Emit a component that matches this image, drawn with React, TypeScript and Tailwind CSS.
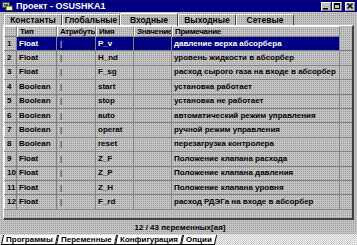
const rows = [
  ["1", "Float", "I", "P_v", "", "давление верха абсорбера"],
  ["2", "Float", "I", "H_nd", "", "уровень жидкости в абсорбер"],
  ["3", "Float", "I", "F_sg", "", "расход сырого газа на входе в абсорбер"],
  ["4", "Boolean", "I", "start", "", "установка работает"],
  ["5", "Boolean", "I", "stop", "", "установка  не работает"],
  ["6", "Boolean", "I", "auto", "", "автоматический режим управления"],
  ["7", "Boolean", "I", "operat", "", "ручной режим управления"],
  ["8", "Boolean", "I", "reset", "", "перезагрузка контролера"],
  ["9", "Float", "I", "Z_F", "", "Положение клапана расхода"],
  ["10", "Float", "I", "Z_P", "", "Положение клапана давления"],
  ["11", "Float", "I", "Z_H", "", "Положение клапана уровня"],
  ["12", "Float", "I", "F_rd", "", "расход РДЭГа на входе в абсорбер"],
];

const topTabs = ["Константы", "Глобальные", "Входные", "Выходные", "Сетевые"];
const bottomTabs = ["Программы", "Переменные", "Конфигурация", "Опции"];

const dither = "[background:conic-gradient(#c4c4c4_0_25%,#9a9a9a_0_50%,#c4c4c4_0_75%,#c4c4c4_0)_0_0/2px_2px]";
const lightDither = "[background:conic-gradient(#f4f4f4_0_25%,#c8c8c8_0_50%,#f4f4f4_0_75%,#c8c8c8_0)_0_0/2px_2px]";
const raised = "border-t border-l border-t-white border-l-white border-r border-b border-r-[#808080] border-b-[#808080]";

function TitleIcon() {
  return (
    <svg width="11" height="10" viewBox="0 0 11 10">
      <rect x="0.5" y="1.5" width="7" height="5" fill="#c0c0c0" stroke="#404040" />
      <rect x="2" y="3" width="4" height="2" fill="#008080" />
      <rect x="4" y="5" width="6.5" height="4.5" fill="#ffff80" stroke="#404040" />
    </svg>
  );
}

function WinButton({ kind }: { kind: "min" | "max" | "close" }) {
  return (
    <div className={`flex h-[9px] w-[10px] items-center justify-center bg-[#c0c0c0] ${raised}`}>
      <svg width="8" height="7" viewBox="0 0 8 7">
        {kind === "min" && <rect x="1" y="5" width="5" height="1.5" fill="#000" />}
        {kind === "max" && <rect x="1.5" y="0.5" width="5" height="5" fill="none" stroke="#000" strokeWidth="1" />}
        {kind === "max" && <rect x="1.5" y="0.5" width="5" height="1.5" fill="#000" />}
        {kind === "close" && <path d="M1.5 0.5 L6.5 5.5 M6.5 0.5 L1.5 5.5" stroke="#000" strokeWidth="1.5" />}
      </svg>
    </div>
  );
}

export default function App() {
  const cols = ["w-[13px]", "w-[40px]", "w-[39px]", "w-[38px]", "w-[38px]", "w-[168px]"];
  return (
    <div
      className={`flex h-[245px] w-[357px] flex-col overflow-hidden ${dither} text-[8px] font-bold text-black`}
      style={{ fontFamily: '"Liberation Sans", Arial, sans-serif' }}
    >
      <div className="flex h-[12px] shrink-0 items-center bg-[#000080] pl-[2px] pr-[2px] text-white">
        <TitleIcon />
        <span className="ml-[3px] text-[9px] leading-none">Проект - OSUSHKA1</span>
        <div className="ml-auto flex gap-[1px]">
          <WinButton kind="min" />
          <WinButton kind="max" />
          <div className="w-[1px]" />
          <WinButton kind="close" />
        </div>
      </div>

      <div className="mt-[1px] flex h-[12px] shrink-0 items-end pl-[4px] text-[8.5px]">
        {topTabs.map((t) => {
          const active = t === "Входные";
          return (
            <div
              key={t}
              className={`flex w-[58px] shrink-0 items-center justify-center rounded-t-[2px] border-t border-l border-r border-t-white border-l-white border-r-[#404040] ${
                active ? "relative z-10 -mb-[1px] h-[13px]" : "h-[11px]"
              }`}
            >
              {t}
            </div>
          );
        })}
      </div>

      <div className="mx-[3px] flex h-[195px] shrink-0 flex-col border-t border-l border-t-white border-l-white border-r-2 border-b-2 border-r-[#404040] border-b-[#404040]">
        <div className="flex h-[11px] shrink-0 tracking-[-0.3px]">
          {["", "Тип", "Атрибуты", "Имя", "Значение", "Примечание"].map((h, i) => (
            <div key={i} className={`${cols[i]} ${raised} flex shrink-0 items-center overflow-hidden whitespace-nowrap pl-[2px] leading-none`}>
              {h}
            </div>
          ))}
        </div>
        {rows.map((r, ri) => (
          <div key={ri} className="flex h-[14.4px] shrink-0 border-b border-b-[#808080]">
            {r.map((c, i) => {
              const sel = ri === 0 && i > 0;
              return (
                <div
                  key={i}
                  className={`${cols[i]} flex shrink-0 items-center overflow-hidden whitespace-nowrap border-r border-r-[#808080] pl-[2px] leading-none ${
                    i === 0 ? "border-l border-l-white pl-[1px]" : ""
                  } ${sel ? "bg-[#000080] text-white" : ""} ${i === 2 ? "pl-[3px] font-normal" : ""}`}
                >
                  {i === 2 ? "|" : c}
                </div>
              );
            })}
          </div>
        ))}
      </div>

      <div className="flex h-[14px] shrink-0 items-center justify-center pl-[3px] pt-[2px]">12 / 43 переменных[ая]</div>

      <div className={`flex flex-1 items-start pl-[2px] pt-[1px] ${lightDither}`}>
        {bottomTabs.map((t) => (
          <div key={t} className="flex h-[10px] items-center border-b border-l border-r border-black bg-white px-[3px] leading-none [transform:skewX(-12deg)]">
            <span className="[transform:skewX(12deg)]">{t}</span>
          </div>
        ))}
      </div>
    </div>
  );
}
